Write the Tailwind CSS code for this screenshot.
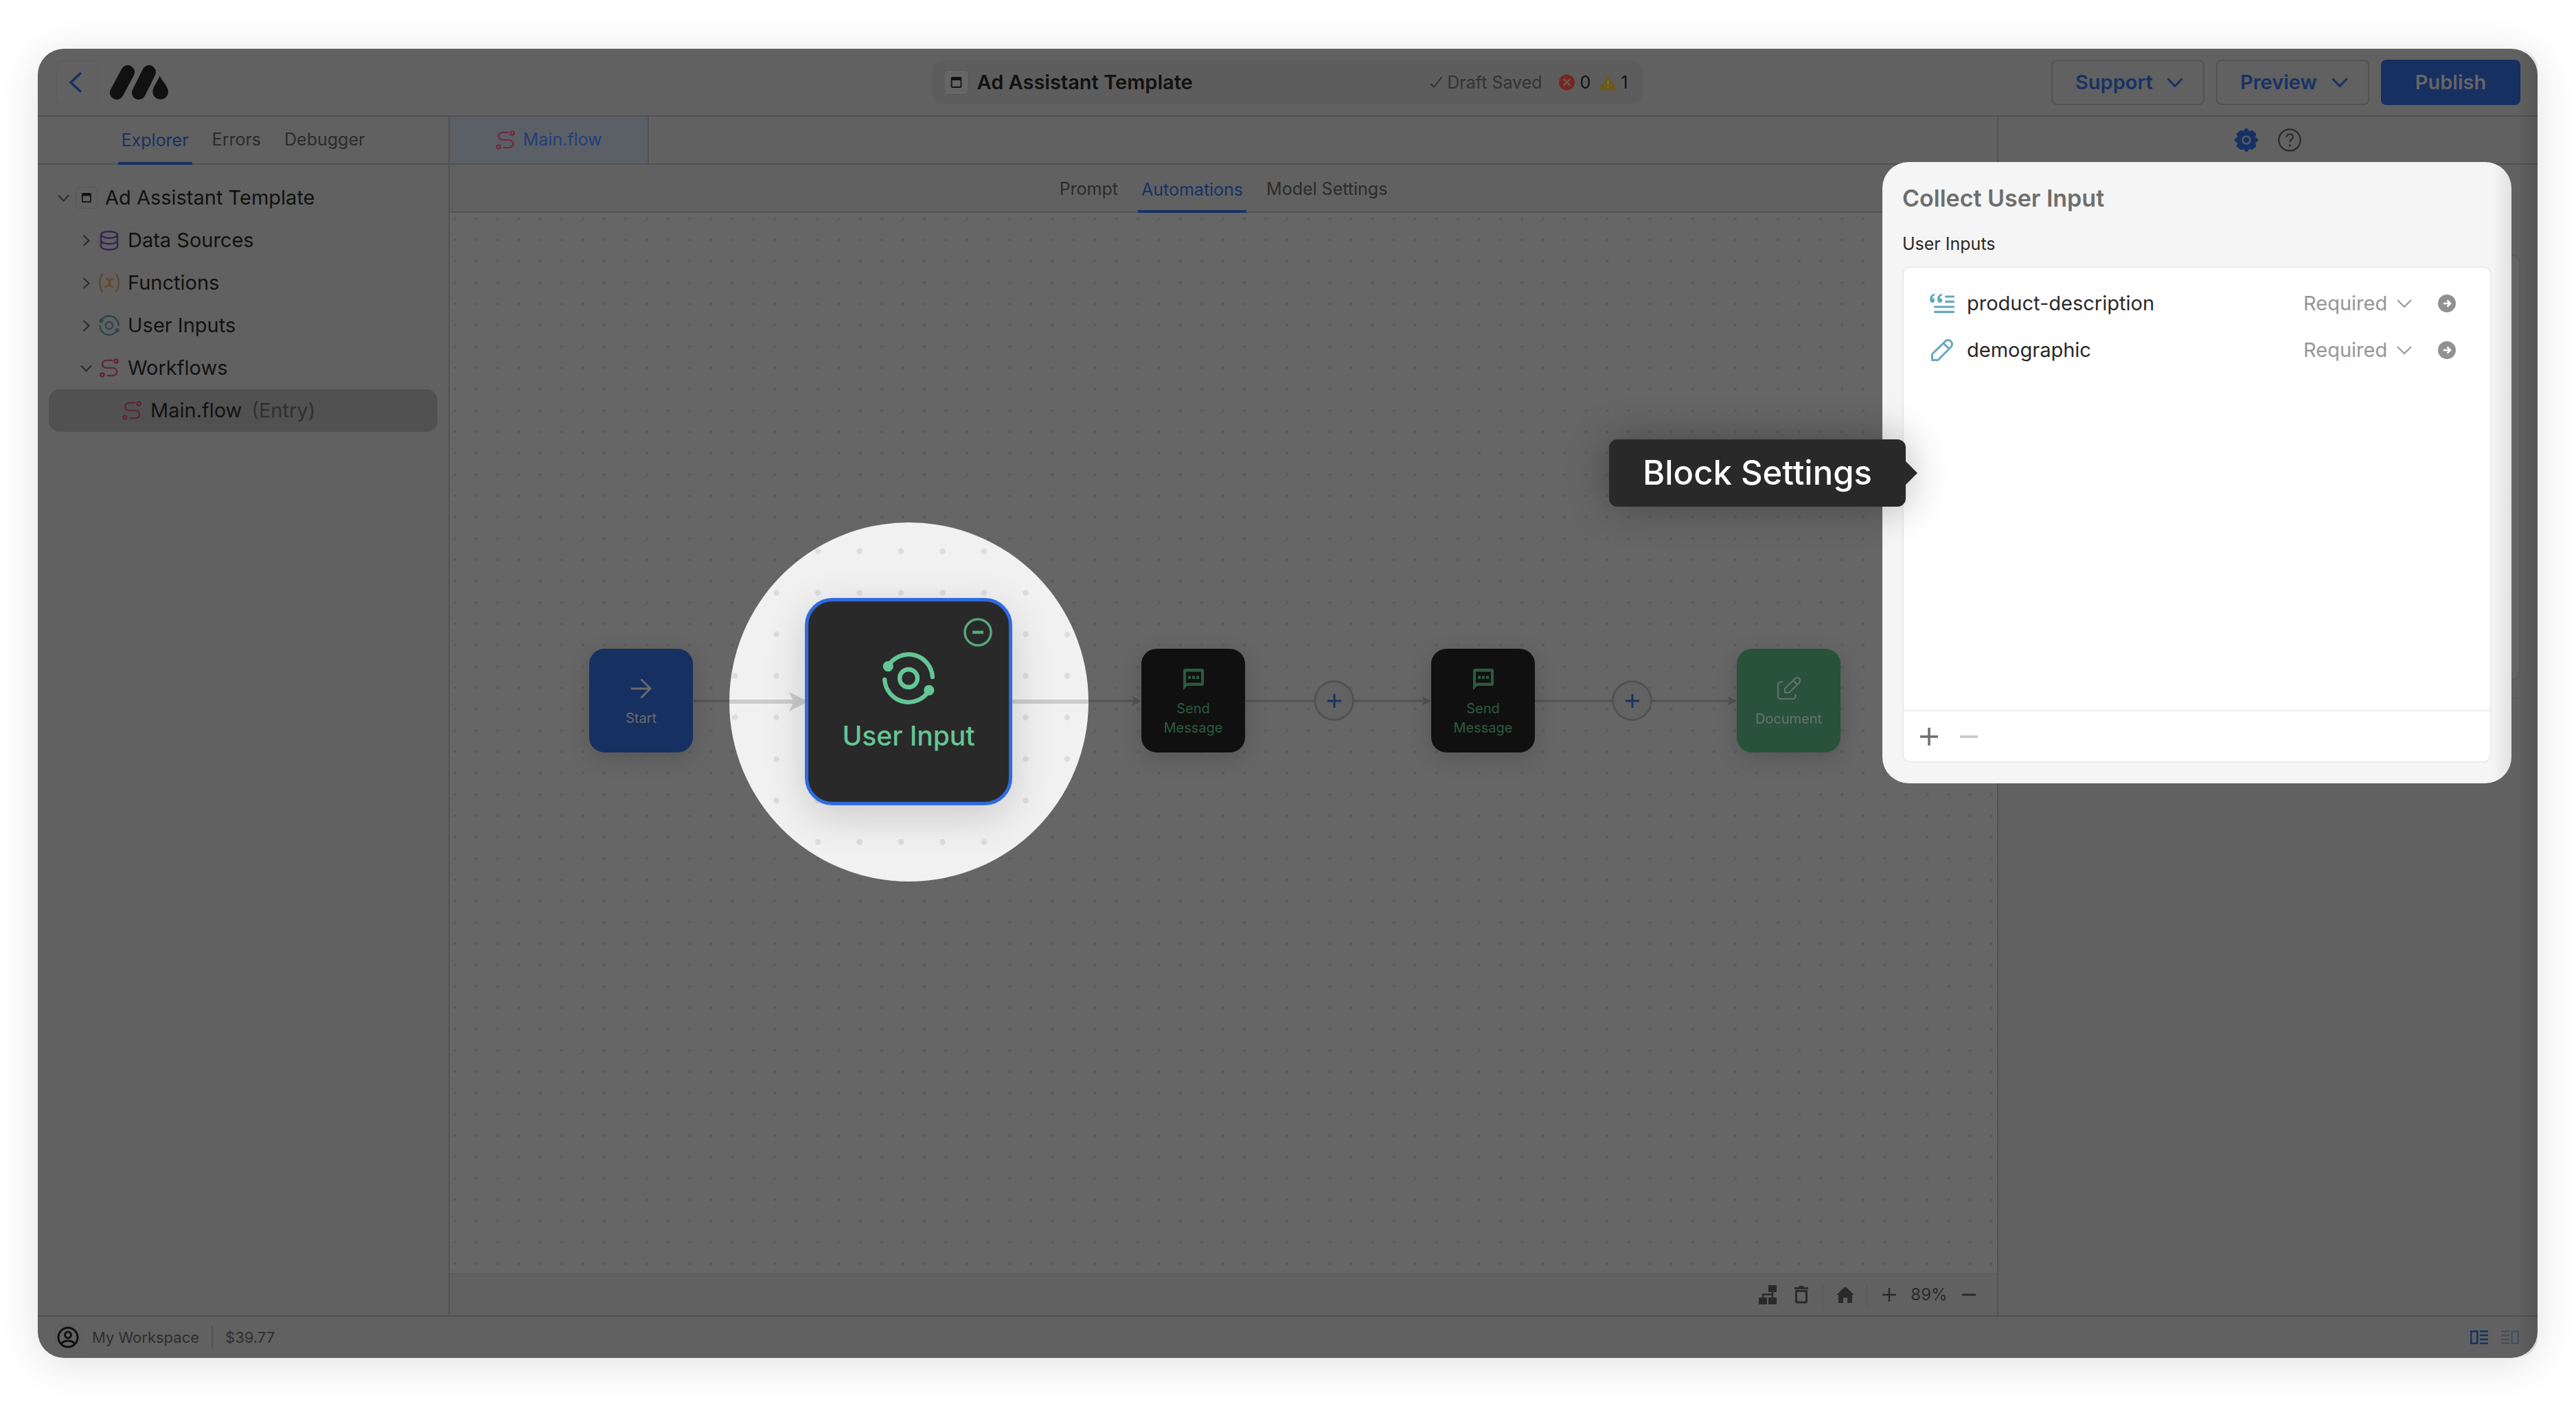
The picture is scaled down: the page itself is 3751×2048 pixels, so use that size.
<!DOCTYPE html>
<html lang="en">
<head>
<meta charset="utf-8">
<meta name="viewport" content="width=device-width, initial-scale=1">
<title>Ad Assistant Template</title>
<script src="https://cdn.jsdelivr.net/npm/@tailwindcss/browser@4"></script>
</head>
<body class="bg-white font-['Inter',sans-serif] text-[#111111]">

<svg class="hidden" aria-hidden="true">
  <defs>
    <symbol id="flow" viewBox="0 0 24 24"><g fill="none" stroke="currentColor" stroke-width="2" stroke-linecap="round"><circle cx="20.6" cy="3.4" r="2.2"/><circle cx="3.4" cy="20.6" r="2.2"/><path d="M15.5 2.5H8.2a4.7 4.7 0 0 0 0 9.4h8.6a4.8 4.8 0 0 1 0 9.6H10"/></g></symbol>
    <symbol id="orbit" viewBox="0 0 24 24"><g fill="none" stroke="currentColor" stroke-width="2" stroke-linecap="round"><circle cx="12" cy="12" r="4.1"/><path d="M2.5 6.5A11 11 0 0 1 23 11.4M21.5 17.5A11 11 0 0 1 1 12.6"/></g><circle cx="2.6" cy="6.5" r="2.4" fill="currentColor"/><circle cx="21.4" cy="17.5" r="2.4" fill="currentColor"/></symbol>
    <symbol id="down" viewBox="0 0 24 14"><path d="M1.5 1.5 12 12.5 22.5 1.5" fill="none" stroke="currentColor" stroke-width="3"/></symbol>
    <symbol id="app" viewBox="0 0 16 16"><path d="M1 2.5A1.5 1.5 0 0 1 2.500 1h11A1.500 1.500 0 0 1 15 2.500v11a1.500 1.500 0 0 1-1.500 1.500h-11A1.500 1.500 0 0 1 1 13.500z" fill="none" stroke="currentColor" stroke-width="2"/><path d="M1 1h14v4H1z" fill="currentColor"/></symbol>
    <symbol id="chat" viewBox="0 0 30 31"><path fill="currentColor" fill-rule="evenodd" d="M3 0h24a3 3 0 0 1 3 3v19a3 3 0 0 1-3 3H6l-6 6V3a3 3 0 0 1 3-3zM4 4.500v16h22v-16z"/><path fill="currentColor" d="M7 10.500h4v4.500H7zM13 10.500h4v4.500h-4zM19 10.500h4v4.500h-4z"/></symbol>
    <symbol id="go" viewBox="0 0 26 26"><circle cx="13" cy="13" r="13" fill="#919191"/><path d="M8 13h9M13.500 8.500 18 13l-4.500 4.500" fill="none" stroke="#fff" stroke-width="2.600"/></symbol>
  </defs>
</svg>

<div class="flex min-h-screen pt-[71px] pr-14 pb-[70px] pl-[55px]">
<div class="relative flex flex-1 flex-col rounded-[38px] bg-[#616161] shadow-[0_8px_60px_rgba(0,0,0,0.12)]">

  <header class="relative flex h-[99px] shrink-0 items-center justify-between border-b-2 border-[#525252] pr-[25px] pl-[26px]">
    <div class="flex items-center gap-4">
      <button aria-label="Back" class="flex h-16 w-[62px] items-center justify-center rounded-lg border-2 border-[#5e5e5e] text-[#163264]">
        <svg class="mr-1 h-8 w-5" viewBox="0 0 20 32" fill="none" stroke="currentColor" stroke-width="3.500"><path d="M18 2 3 16l15 14"/></svg>
      </button>
      <svg class="h-[50px] w-[86px]" viewBox="0 0 86 50" role="img" aria-label="MindStudio" fill="none" stroke="#111111" stroke-width="20" stroke-linecap="round"><path d="M11 40 27 10M43 40 58 10"/><path d="M73.500 15.500C77 23 86 31 86 38.500a11.300 11.300 0 0 1-22.600 0c0-7.500 7-14 10.100-23z" fill="#111111" stroke="none"/></svg>
    </div>
    <div class="absolute left-1/2 flex h-16 w-[1035px] -translate-x-1/2 items-center rounded-2xl bg-[#5d5d5d] pr-[22px] pl-[17px]">
      <span class="flex size-9 items-center justify-center rounded-md border border-[#585858] bg-[#666666]"><svg class="size-4"><use href="#app"/></svg></span>
      <h1 class="ml-3 flex-1 text-[29px] leading-10 font-semibold">Ad Assistant Template</h1>
      <svg class="mr-[7px] h-[18px] w-[18px] text-[#333333]" viewBox="0 0 18 18" fill="none" stroke="currentColor" stroke-width="2"><path d="M1 11l4.500 5L17 1"/></svg>
      <span class="text-[25px] leading-8 text-[#333333]">Draft Saved</span>
      <svg class="ml-6 size-6" viewBox="0 0 24 24"><circle cx="12" cy="12" r="11.500" fill="#762820"/><path d="M7 7l10 10M17 7 7 17" stroke="#66605f" stroke-width="2"/></svg>
      <span class="ml-[7px] text-[25px] leading-8">0</span>
      <svg class="ml-[11px] h-6 w-7" viewBox="0 0 28 24"><path d="M14 1 27.500 23.500H.5z" fill="#6b5a1b"/><path d="M14 9v6.500M14 18v3" stroke="#77704c" stroke-width="2.400"/></svg>
      <span class="ml-[5px] text-[25px] leading-8">1</span>
    </div>
    <div class="flex gap-[17px] text-[29px] leading-10 font-semibold text-[#163264]">
      <button class="flex h-[66px] w-[223px] items-center justify-between rounded-lg border-2 border-[#525252] pr-[29px] pl-[33px]">Support<svg class="h-[14px] w-6"><use href="#down"/></svg></button>
      <button class="flex h-[66px] w-[223px] items-center justify-between rounded-lg border-2 border-[#525252] pr-[29px] pl-[33px]">Preview<svg class="h-[14px] w-6"><use href="#down"/></svg></button>
      <button class="h-[66px] w-[203px] rounded-lg bg-[#163062] text-[#666666]">Publish</button>
    </div>
  </header>

  <div class="flex flex-1">
    <aside class="flex w-[600px] shrink-0 flex-col border-r-2 border-[#525252]">
      <nav class="flex h-[70px] items-stretch justify-center gap-6 border-b-2 border-[#525252] text-[25px] text-[#2b2b2b]" aria-label="Sidebar">
        <a href="#" class="-mb-0.5 flex items-center border-b-4 border-[#163264] px-[5px] pt-1 text-[#163264]">Explorer</a>
        <a href="#" class="flex items-center px-[5px]">Errors</a>
        <a href="#" class="flex items-center px-[5px]">Debugger</a>
      </nav>
      <ul class="flex flex-col px-4 pt-[17px] text-[29px]">
        <li class="flex h-[62px] items-center pl-[5px]">
          <span class="flex w-[33px] justify-center text-[#2b2b2b]"><svg class="h-[11px] w-[17px]"><use href="#down"/></svg></span>
          <span class="flex w-[34px] justify-center"><span class="flex size-8 items-center justify-center rounded-md border border-[#575757]"><svg class="size-[14px]"><use href="#app"/></svg></span></span>
          <span class="ml-[10px]">Ad Assistant Template</span>
        </li>
        <li class="flex h-[62px] items-center pl-[38px]">
          <span class="flex w-[33px] justify-center text-[#2b2b2b]"><svg class="h-[11px] w-[17px] -rotate-90"><use href="#down"/></svg></span>
          <span class="flex w-[34px] justify-center text-[#33254f]"><svg class="h-[29px] w-7" viewBox="0 0 28 29" fill="none" stroke="currentColor" stroke-width="2.500"><ellipse cx="14" cy="6" rx="12" ry="4.700"/><path d="M2 6v17c0 2.600 5.400 4.700 12 4.700S26 25.600 26 23V6M2 14.500c0 2.600 5.400 4.700 12 4.700s12-2.100 12-4.700"/></svg></span>
          <span class="ml-[10px]">Data Sources</span>
        </li>
        <li class="flex h-[62px] items-center pl-[38px]">
          <span class="flex w-[33px] justify-center text-[#2b2b2b]"><svg class="h-[11px] w-[17px] -rotate-90"><use href="#down"/></svg></span>
          <span class="flex w-[34px] justify-center text-[#67451c]"><svg class="h-7 w-[30px]" viewBox="0 0 30 28" fill="none" stroke="currentColor" stroke-width="2.200" stroke-linecap="round"><path d="M4.500 1.500c-4.300 8-4.300 17 0 25M25.500 1.500c4.300 8 4.300 17 0 25M10.500 8c3.500-.8 4 1.500 5 6s2 6.500 4.500 5.500M20.500 8.500c-3-1-4.500 2.500-5.500 5.500s-3 6.500-5.500 5.500"/></svg></span>
          <span class="ml-[10px]">Functions</span>
        </li>
        <li class="flex h-[62px] items-center pl-[38px]">
          <span class="flex w-[33px] justify-center text-[#2b2b2b]"><svg class="h-[11px] w-[17px] -rotate-90"><use href="#down"/></svg></span>
          <span class="flex w-[34px] justify-center text-[#2a4650]"><svg class="size-[30px]"><use href="#orbit"/></svg></span>
          <span class="ml-[10px]">User Inputs</span>
        </li>
        <li class="flex h-[62px] items-center pl-[38px]">
          <span class="flex w-[33px] justify-center text-[#2b2b2b]"><svg class="h-[11px] w-[17px]"><use href="#down"/></svg></span>
          <span class="flex w-[34px] justify-center text-[#5f2536]"><svg class="size-7"><use href="#flow"/></svg></span>
          <span class="ml-[10px]">Workflows</span>
        </li>
        <li class="flex h-[62px] items-center rounded-2xl bg-[#515151] pl-[104px]">
          <span class="flex w-[34px] justify-center text-[#5f2536]"><svg class="size-7"><use href="#flow"/></svg></span>
          <span class="ml-[10px]">Main.flow</span>
          <span class="ml-[14px] text-[#303030]">(Entry)</span>
        </li>
      </ul>
    </aside>

    <main class="flex min-w-0 flex-1 flex-col">
      <div class="flex h-[70px] border-b-2 border-[#525252]">
        <a href="#" class="flex w-[290px] items-center justify-center gap-3 border-r-2 border-[#525252] bg-[#5b6066] text-[25px] text-[#213f78]"><svg class="size-7 text-[#6b2c40]"><use href="#flow"/></svg>Main.flow</a>
      </div>
      <nav class="flex h-[70px] items-stretch justify-center gap-6 border-b-2 border-[#525252] text-[25px] text-[#2b2b2b]" aria-label="Workflow">
        <a href="#" class="flex items-center px-[5px] pt-1">Prompt</a>
        <a href="#" class="-mb-0.5 flex items-center border-b-4 border-[#163264] px-[5px] pt-2 text-[#163264]">Automations</a>
        <a href="#" class="flex items-center px-[5px] pt-1">Model Settings</a>
      </nav>

      <!-- Workflow canvas -->
      <div class="relative flex-1 overflow-hidden bg-[#666666] text-[20px] leading-7">
        <svg class="absolute inset-0 size-full" aria-hidden="true">
          <defs>
            <pattern id="dots" x="-8" y="-7.300" width="31.070" height="31.070" patternUnits="userSpaceOnUse"><circle cx="15.500" cy="15.500" r="2.200" fill="#5b5b5b"/></pattern>
          </defs>
          <rect width="100%" height="100%" fill="url(#dots)"/>
          <path d="M353 711h645M1158 711h262M1579 711h288" stroke="#525252" stroke-width="3"/>
          <g fill="#525252"><path id="tip" d="M1007 711l-14-7 3.500 7-3.500 7z"/><use href="#tip" x="422"/><use href="#tip" x="867"/></g>
        </svg>

        <div class="absolute top-[635px] left-[203px] flex size-[151px] flex-col items-center rounded-[22px] bg-[#163062] pt-[43px] text-[#6b6b6b] shadow-[0_8px_32px_rgba(0,0,0,0.16)]">
          <svg class="mb-[14px] size-[30px] shrink-0" viewBox="0 0 30 30" fill="none" stroke="currentColor" stroke-width="2.800"><path d="M0 15h28M14.500 1.500 28 15 14.500 28.500"/></svg>Start
        </div>
        <div class="absolute top-[635px] left-[1007px] flex size-[151px] flex-col items-center rounded-[22px] bg-[#101010] pt-[29px] text-center text-[#2c5a41] shadow-[0_8px_32px_rgba(0,0,0,0.16)]">
          <svg class="mb-[13px] h-[31px] w-[30px] shrink-0"><use href="#chat"/></svg>Send<br>Message
        </div>
        <button aria-label="Add block" class="absolute top-[681px] left-[1258px] flex size-[59px] items-center justify-center rounded-full border-3 border-[#525252] bg-[#626262] text-[#163264]"><svg class="size-5" viewBox="0 0 20 20" stroke="currentColor" stroke-width="3"><path d="M10 0v20M0 10h20"/></svg></button>
        <div class="absolute top-[635px] left-[1429px] flex size-[151px] flex-col items-center rounded-[22px] bg-[#101010] pt-[29px] text-center text-[#2c5a41] shadow-[0_8px_32px_rgba(0,0,0,0.16)]">
          <svg class="mb-[13px] h-[31px] w-[30px] shrink-0"><use href="#chat"/></svg>Send<br>Message
        </div>
        <button aria-label="Add block" class="absolute top-[681px] left-[1692px] flex size-[59px] items-center justify-center rounded-full border-3 border-[#525252] bg-[#626262] text-[#163264]"><svg class="size-5" viewBox="0 0 20 20" stroke="currentColor" stroke-width="3"><path d="M10 0v20M0 10h20"/></svg></button>
        <div class="absolute top-[635px] left-[1874px] flex size-[151px] flex-col items-center rounded-[22px] bg-[#29523a] pt-10 text-[#66716b] shadow-[0_8px_32px_rgba(0,0,0,0.16)]">
          <svg class="mb-[14px] size-[34px] shrink-0" viewBox="0 0 34 34" fill="none" stroke="currentColor" stroke-width="2.200" stroke-linecap="round" stroke-linejoin="round"><path d="M7 8.500H5a4 4 0 0 0-4 4V29a4 4 0 0 0 4 4h17.500a4 4 0 0 0 4-4v-2M11 18v6h6L32 9.300a4.200 4.200 0 0 0-6-6zM23 6l6 6"/></svg>Document
        </div>

        <!-- Highlighted block -->
        <div class="absolute top-[451px] left-[407px] size-[523px] overflow-hidden rounded-full bg-[#f1f1f1]">
          <svg class="absolute inset-0 size-full" aria-hidden="true">
            <defs><pattern id="bigdots" x="-22.200" y="11.700" width="60.500" height="60.500" patternUnits="userSpaceOnUse"><circle cx="30.250" cy="30.250" r="4.200" fill="#dcdcdc"/></pattern></defs>
            <rect width="100%" height="100%" fill="url(#bigdots)"/>
            <path d="M0 261h98M411 261h112" stroke="#cbcbcb" stroke-width="6"/>
            <path d="M115 261l-28-14 7 14-7 14z" fill="#cbcbcb"/>
          </svg>
          <div class="absolute top-[110px] left-[110px] flex size-[302px] flex-col items-center rounded-[40px] border-5 border-[#2e6be0] bg-[#292929] pt-[74px] text-[39px] leading-[48px] font-medium text-[#65c694] shadow-[0_16px_60px_rgba(0,0,0,0.16)]">
            <button aria-label="Remove block" class="absolute top-6 right-6 text-[#58a67d]"><svg class="size-[42px]" viewBox="0 0 42 42" fill="none" stroke="currentColor" stroke-width="3.500"><circle cx="21" cy="21" r="19"/><path d="M13 21h16" stroke-width="4.500"/></svg></button>
            <svg class="mb-[22px] size-[76px] shrink-0"><use href="#orbit"/></svg>User Input
          </div>
        </div>
      </div>

      <div class="flex h-[62px] items-center justify-end border-t-2 border-[#5e5e5e] pr-[31px] text-[24px] text-[#2a2a2a]">
        <button aria-label="Arrange blocks"><svg class="h-7 w-[26px]" viewBox="0 0 26 28" fill="currentColor"><path d="M14 0h12v10H14zM0 18h12v10H0zM14 18h12v10H14z"/><path d="M20 10v8M6 18v-4.500h14" fill="none" stroke="currentColor" stroke-width="2.500"/></svg></button>
        <button aria-label="Delete" class="ml-[26px]"><svg class="h-[26px] w-5" viewBox="0 0 20 26"><path d="M0 2h6l1-2h6l1 2h6v3H0z" fill="currentColor"/><path d="M2.500 7.500h15V22a2 2 0 0 1-2 2h-11a2 2 0 0 1-2-2z" fill="none" stroke="currentColor" stroke-width="3"/></svg></button>
        <span class="ml-[21px] h-8 w-0.5 bg-[#5b5b5b]"></span>
        <button aria-label="Home" class="ml-[18px]"><svg class="h-6 w-[26px]" viewBox="0 0 26 24"><path d="M13 0 26 12h-3v10.500a1.500 1.500 0 0 1-1.500 1.500H16v-8h-6v8H4.500A1.500 1.500 0 0 1 3 22.500V12H0z" fill="currentColor"/></svg></button>
        <span class="ml-[18px] h-8 w-0.5 bg-[#5b5b5b]"></span>
        <button aria-label="Zoom in" class="ml-[21px]"><svg class="size-5" viewBox="0 0 20 20" stroke="currentColor" stroke-width="2.500"><path d="M10 0v20M0 10h20"/></svg></button>
        <span class="w-24 text-center">89%</span>
        <button aria-label="Zoom out"><svg class="size-5" viewBox="0 0 20 20" stroke="currentColor" stroke-width="3"><path d="M0 10h20"/></svg></button>
      </div>
    </main>

    <aside class="flex w-[787px] shrink-0 flex-col border-l-2 border-[#525252]">
      <div class="flex h-[70px] items-center justify-center gap-[29px] border-b-2 border-[#525252]">
        <button aria-label="Settings" class="text-[#163264]"><svg class="size-[34px]" viewBox="0 0 34 34"><path fill="currentColor" d="M14 2a3.200 3.200 0 0 1 6 0l1 2 2.300-.8A3.200 3.200 0 0 1 28 5.500a3.200 3.200 0 0 1 2.700 4.900L29.900 13l2.100 1a3.200 3.200 0 0 1 0 6l-2.100 1 .8 2.600A3.200 3.200 0 0 1 28 28.500a3.200 3.200 0 0 1-4.700 2.300L21 30l-1 2a3.200 3.200 0 0 1-6 0l-1-2-2.300.8A3.200 3.200 0 0 1 6 28.500a3.200 3.200 0 0 1-2.700-4.900L4.100 21 2 20a3.200 3.200 0 0 1 0-6l2.100-1-.8-2.600A3.200 3.200 0 0 1 6 5.500a3.200 3.200 0 0 1 4.700-2.300L13 4z"/><circle cx="17" cy="17" r="5.500" fill="none" stroke="#616161" stroke-width="2.200"/></svg></button>
        <button aria-label="Help" class="text-[#2b2b2b]"><svg class="size-[34px]" viewBox="0 0 34 34" fill="none" stroke="currentColor" stroke-width="2.200"><circle cx="17" cy="17" r="15.700"/><path d="M12.500 13c0-6 9.500-6 9.500-.8 0 3.600-4.800 3.800-4.800 7.800"/><path d="M17.200 23.500v3" stroke-width="2.600"/></svg></button>
      </div>
      <div class="mx-[25px] mt-[131px] h-[620px] rounded-xl border-2 border-[#5b5b5b] bg-[#646464]"></div>
      <div class="mx-[25px] mt-[25px] h-0.5 bg-[#5b5b5b]"></div>
    </aside>
  </div>

  <footer class="flex h-[62px] shrink-0 items-center border-t-2 border-[#525252] pr-[27px] pl-[25px] text-[22px] text-[#2e2e2e]">
    <span class="flex size-[37px] items-center justify-center rounded-lg border border-[#5b5b5b] text-[#111111]"><svg class="size-8 shrink-0" viewBox="0 0 32 32" fill="none" stroke="currentColor" stroke-width="3"><circle cx="16" cy="16" r="14"/><circle cx="16" cy="12.500" r="4.500"/><path d="M6 25.500c4-6 16-6 20 0"/></svg></span>
    <span class="ml-[17px]">My Workspace</span>
    <span class="ml-[18px] h-8 w-0.5 bg-[#525252]"></span>
    <span class="ml-[18px] flex-1">$39.77</span>
    <button aria-label="Toggle left panel" class="text-[#163264]"><svg class="h-5 w-[26px]" viewBox="0 0 26 20" fill="none" stroke="currentColor" stroke-width="2.500"><path d="M1.300 1.300h9v17.400h-9zM14 1.300h12M14 7.100h12M14 12.900h12M14 18.700h12"/></svg></button>
    <button aria-label="Toggle right panel" class="ml-[19px] text-[#464f63]"><svg class="h-5 w-[26px]" viewBox="0 0 26 20" fill="none" stroke="currentColor" stroke-width="2.500"><path d="M15.700 1.300h9v17.400h-9zM0 1.300h12M0 7.100h12M0 12.900h12M0 18.700h12"/></svg></button>
  </footer>

  <div class="pointer-events-none absolute inset-y-0 right-0 w-[30px] rounded-r-[38px] bg-linear-to-r from-black/0 to-black/12"></div>

  <!-- Block settings panel -->
  <section class="absolute top-[165px] right-[38px] w-[916px] rounded-[38px] bg-[#f5f5f5] bg-linear-to-r from-black/0 from-97% to-black/8 px-[29px] pt-[33px] pb-[30px]">
    <h2 class="text-[34px] leading-10 font-semibold text-[#6e6e6e]">Collect User Input</h2>
    <h3 class="mt-[30px] text-[25px] leading-8 text-[#292929]">User Inputs</h3>
    <div class="mt-[17px] flex min-h-[723px] flex-col rounded-xl border-2 border-[#ebebeb] bg-white text-[29px] text-[#292929]">
      <ul class="flex-1 pt-[18px]">
        <li class="flex h-[68px] items-center pr-[50px] pl-[38px]">
          <svg class="mr-[18px] h-7 w-9 text-[#67a8bf]" viewBox="0 0 36 28" fill="currentColor"><path d="M7 0v2.500C4.500 3 3.800 4.500 3.800 6.200 6 6 7.300 7.500 7.300 9.500S5.800 13 3.700 13C1.200 13 0 11 0 8 0 3.500 2.500.5 7 0zM18 0v2.500c-2.500.5-3.200 2-3.200 3.700 2.200-.2 3.500 1.300 3.500 3.300S16.800 13 14.700 13C12.200 13 11 11 11 8c0-4.500 2.500-7.500 7-8z"/><path d="M23.500 4h11M23.500 11.300h11M7.500 19h27M7.500 26.300h27" stroke="currentColor" stroke-width="3.200" stroke-linecap="round"/></svg>
          <span class="flex-1">product-description</span>
          <span class="relative mr-[38px] flex w-[158px] items-center text-[#969696]">
            <select aria-label="product-description requirement" class="w-full appearance-none bg-transparent"><option>Required</option><option>Optional</option></select>
            <svg class="pointer-events-none absolute right-0 h-3 w-[22px]" viewBox="0 0 22 12" fill="none" stroke="currentColor" stroke-width="2"><path d="M1 1l10 10L21 1"/></svg>
          </span>
          <button aria-label="Open product-description"><svg class="size-[26px]"><use href="#go"/></svg></button>
        </li>
        <li class="flex h-[68px] items-center pr-[50px] pl-[38px]">
          <svg class="mr-[18px] h-8 w-9 text-[#67a8bf]" viewBox="0 0 36 32" fill="none" stroke="currentColor" stroke-width="3" stroke-linejoin="round"><path d="M3.500 30.500v-8.700L22.500 3.200a5.800 5.800 0 0 1 8.300 8.300L12 30.500zM20 6l8.500 8.500"/></svg>
          <span class="flex-1">demographic</span>
          <span class="relative mr-[38px] flex w-[158px] items-center text-[#969696]">
            <select aria-label="demographic requirement" class="w-full appearance-none bg-transparent"><option>Required</option><option>Optional</option></select>
            <svg class="pointer-events-none absolute right-0 h-3 w-[22px]" viewBox="0 0 22 12" fill="none" stroke="currentColor" stroke-width="2"><path d="M1 1l10 10L21 1"/></svg>
          </span>
          <button aria-label="Open demographic"><svg class="size-[26px]"><use href="#go"/></svg></button>
        </li>
      </ul>
      <div class="flex h-[75px] items-center gap-8 border-t-2 border-[#ebebeb] pl-6">
        <button aria-label="Add user input" class="text-[#6e6e6e]"><svg class="size-[26px]" viewBox="0 0 26 26" stroke="currentColor" stroke-width="3.500"><path d="M13 0v26M0 13h26"/></svg></button>
        <button aria-label="Remove user input" class="text-[#c5c5c5]"><svg class="size-[26px]" viewBox="0 0 26 26" stroke="currentColor" stroke-width="3.500"><path d="M0 13h26"/></svg></button>
      </div>
    </div>

    <div role="tooltip" class="absolute top-[404px] right-[882px] flex h-[98px] w-[432px] items-center justify-center rounded-xl bg-[#292929] text-[49px] font-medium text-white shadow-[0_0_60px_rgba(0,0,0,0.3)]">
      Block Settings
      <svg class="absolute top-8 -right-[17px] h-[34px] w-[18px]" viewBox="0 0 18 34" fill="#292929"><path d="M0 0h1l17 17L1 34H0z"/></svg>
    </div>
  </section>
</div>
</div>
</body>
</html>
